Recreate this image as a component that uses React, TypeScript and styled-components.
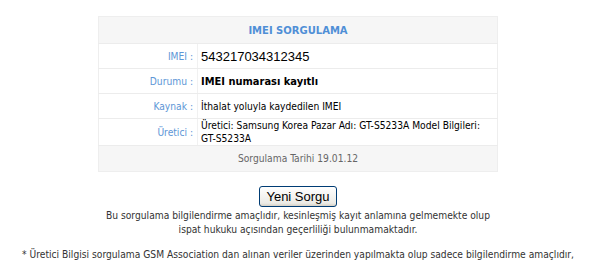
import React from "react";
import styled, { createGlobalStyle } from "styled-components";

const GlobalStyle = createGlobalStyle`
  html, body {
    margin: 0;
    padding: 0;
    background: #fff;
  }
  body {
    font-family: Tahoma, "DejaVu Sans Condensed", "DejaVu Sans", sans-serif;
    font-size: 10.2px;
    color: #333;
  }
`;

const Page = styled.div`
  padding: 16px 0 0 4px;
  text-align: center;
`;

const ResultTable = styled.table`
  width: 400px;
  margin: 0 auto;
  border-collapse: collapse;
  border: 1px solid #eeeeee;
  text-align: left;
`;

const HeadCell = styled.th`
  height: 26px;
  padding: 0;
  background: #f6f6f6;
  color: #4f8fd6;
  font-family: Tahoma, "DejaVu Sans", sans-serif;
  font-weight: bold;
  font-size: 10px;
  text-align: center;
  border-bottom: 1px solid #ececec;
`;

const Row = styled.tr`
  height: 25px;
`;

const Label = styled.td`
  width: 94px;
  padding: 0 4px 0 0;
  text-align: right;
  color: #5d96d6;
  border-bottom: 1px solid #ececec;
  border-right: 1px solid #f1f1f1;
  background: #fff;
`;

const Value = styled.td<{ $big?: boolean; $bold?: boolean }>`
  padding: 0 4px 0 3px;
  color: #000;
  font-family: ${({ $big }) =>
    $big ? '"Liberation Sans", Arial, sans-serif' : 'Tahoma, "DejaVu Sans Condensed", sans-serif'};
  font-size: ${({ $big, $bold }) => ($big ? "13px" : $bold ? "11px" : "10.2px")};
  font-weight: ${({ $bold }) => ($bold ? "bold" : "normal")};
  line-height: 13px;
  border-bottom: 1px solid #ececec;
  background: #fff;
`;

const NoWrap = styled.span`
  white-space: nowrap;
`;

const FootCell = styled.td`
  height: 25px;
  padding: 0;
  background: #f6f6f6;
  color: #666;
  text-align: center;
`;

const NewQuery = styled.button`
  margin-top: 14px;
  height: 21px;
  padding: 0 6px;
  font-family: "Liberation Sans", Arial, sans-serif;
  font-size: 13px;
  color: #000;
  border: 1px solid #003c74;
  border-radius: 3px;
  background: linear-gradient(#ffffff, #ecebe6 85%, #d6d0c5);
  cursor: pointer;
`;

const Note = styled.p`
  margin: 2px 0 0;
  line-height: 14px;
  color: #333;
`;

const FootNote = styled.p`
  margin: 11px 0 0;
  line-height: 14px;
  color: #333;
`;

export default function App() {
  return (
    <>
      <GlobalStyle />
      <Page>
        <ResultTable>
          <thead>
            <tr>
              <HeadCell colSpan={2}>IMEI SORGULAMA</HeadCell>
            </tr>
          </thead>
          <tbody>
            <Row>
              <Label>IMEI :</Label>
              <Value $big>543217034312345</Value>
            </Row>
            <Row>
              <Label>Durumu :</Label>
              <Value $bold>IMEI numarası kayıtlı</Value>
            </Row>
            <Row>
              <Label>Kaynak :</Label>
              <Value>İthalat yoluyla kaydedilen IMEI</Value>
            </Row>
            <Row>
              <Label>Üretici :</Label>
              <Value>
                Üretici: Samsung Korea Pazar Adı: <NoWrap>GT-S5233A</NoWrap> Model Bilgileri:{" "}
                <NoWrap>GT-S5233A</NoWrap>
              </Value>
            </Row>
            <tr>
              <FootCell colSpan={2}>Sorgulama Tarihi 19.01.12</FootCell>
            </tr>
          </tbody>
        </ResultTable>
        <NewQuery type="button">Yeni Sorgu</NewQuery>
        <Note>
          Bu sorgulama bilgilendirme amaçlıdır, kesinleşmiş kayıt anlamına gelmemekte olup
          <br />
          ispat hukuku açısından geçerliliği bulunmamaktadır.
        </Note>
        <FootNote>
          * Üretici Bilgisi sorgulama GSM Association dan alınan veriler üzerinden yapılmakta olup sadece bilgilendirme amaçlıdır,
        </FootNote>
      </Page>
    </>
  );
}
